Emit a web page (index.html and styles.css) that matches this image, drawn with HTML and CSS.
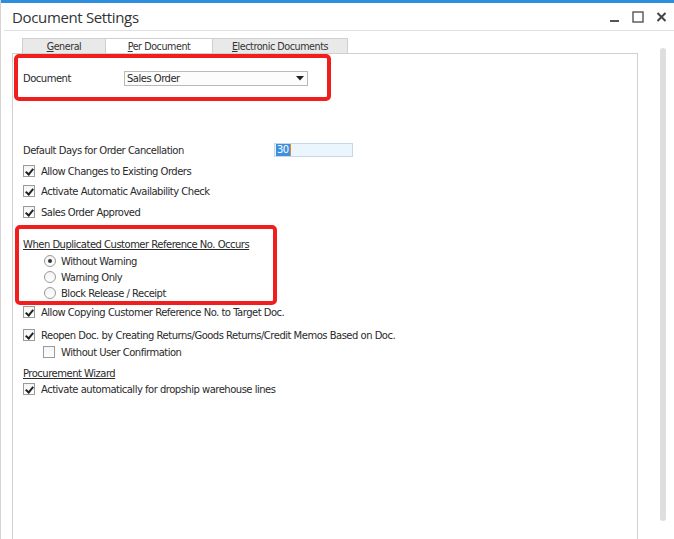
FILE: index.html
```html
<!DOCTYPE html>
<html>
<head>
<meta charset="utf-8">
<link rel="stylesheet" href="styles.css">
</head>
<body>
<div class="window">
  <div class="topbar"></div>
  <div class="titlebar">
    <div class="title">Document Settings</div>
    <div class="controls">
      <svg class="ctl" width="10" height="12" viewBox="0 0 10 12"><rect x="0" y="9" width="9" height="2" fill="#555"/></svg>
      <svg class="ctl" width="12" height="12" viewBox="0 0 12 12"><rect x="1" y="1" width="10" height="10" fill="none" stroke="#555" stroke-width="1.4"/></svg>
      <svg class="ctl" width="11" height="12" viewBox="0 0 11 12"><path d="M1.5 2 L9.5 10 M9.5 2 L1.5 10" stroke="#444" stroke-width="2"/></svg>
    </div>
  </div>
  <div class="body">
    <div class="main">
      <div class="tabs">
        <div class="tab tab-general"><u>G</u>eneral</div>
        <div class="tab tab-active tab-per"><u>P</u>er Document</div>
        <div class="tab tab-elec"><u>E</u>lectronic Documents</div>
      </div>
      <div class="panel">
        <div class="mark mark-doc"></div>
        <div class="mark mark-dup"></div>
        <div class="row row-doc">
          <span class="lbl-doc">Document</span>
          <div class="select">
            <span>Sales Order</span>
            <svg width="8" height="5" viewBox="0 0 8 5"><path d="M0 0 H8 L4 4.5 Z" fill="#222"/></svg>
          </div>
        </div>
        <div class="row row-days">
          <span class="lbl-days">Default Days for Order Cancellation</span>
          <div class="input"><span class="sel">30</span><span class="caret"></span></div>
        </div>
        <div class="row cb row-c1"><span class="box checked"></span>Allow Changes to Existing Orders</div>
        <div class="row cb row-c2"><span class="box checked"></span>Activate Automatic Availability Check</div>
        <div class="row cb row-c3"><span class="box checked"></span>Sales Order Approved</div>
        <div class="row heading row-h1">When Duplicated Customer Reference No. Occurs</div>
        <div class="row rb row-r1"><span class="radio on"></span>Without Warning</div>
        <div class="row rb"><span class="radio"></span>Warning Only</div>
        <div class="row rb"><span class="radio"></span>Block Release / Receipt</div>
        <div class="row cb row-c4"><span class="box checked"></span>Allow Copying Customer Reference No. to Target Doc.</div>
        <div class="row cb row-c5"><span class="box checked"></span>Reopen Doc. by Creating Returns/Goods Returns/Credit Memos Based on Doc.</div>
        <div class="row cb sub row-c6"><span class="box"></span>Without User Confirmation</div>
        <div class="row heading row-h2">Procurement Wizard</div>
        <div class="row cb"><span class="box checked"></span>Activate automatically for dropship warehouse lines</div>
      </div>
    </div>
    <div class="scrollbar"></div>
  </div>
</div>
</body>
</html>
```
FILE: styles.css
```css
html, body {
  margin: 0;
  padding: 0;
  background: #fff;
  overflow: hidden;
}
body {
  font-family: "DejaVu Sans", "Liberation Sans", sans-serif;
  width: 674px;
  height: 539px;
}
.window {
  height: 539px;
  border-left: 1px solid #d4d4d4;
  box-sizing: border-box;
  overflow: hidden;
}
.topbar {
  height: 3px;
  background: #2d8ee0;
}
.titlebar {
  height: 27px;
  display: flex;
  align-items: center;
  justify-content: space-between;
  border-bottom: 1px solid #e0e0e0;
  margin-left: 3px;
}
.title {
  font-family: "Open Sans", "Noto Sans", sans-serif;
  font-size: 15px;
  color: #333;
  padding-left: 8px;
  letter-spacing: -0.35px;
}
.controls {
  display: flex;
  align-items: center;
  gap: 12px;
  padding-right: 7px;
}
.ctl { display: block; }
.body {
  display: flex;
  align-items: flex-start;
}
.main {
  margin-left: 11px;
  margin-top: 7px;
  width: 626px;
}
.tabs {
  display: flex;
  padding-left: 10px;
  height: 15px;
}
.tab {
  font-size: 9.6px;
  color: #333;
  height: 15px;
  line-height: 15px;
  text-align: center;
  background: #e9e9e9;
  border: 1px solid #cfcfcf;
  border-bottom: none;
  box-sizing: border-box;
  letter-spacing: -0.45px;
}
.tab u { text-decoration: underline; }
.tab-general { width: 84px; }
.tab-per { width: 106px; border-left: none; border-right: none; }
.tab-elec { width: 136px; }
.tab-active {
  background: #fff;
}
.panel {
  position: relative;
  border: 1px solid #d0d0d0;
  height: 520px;
  box-sizing: border-box;
  padding: 16px 0 0 10px;
}
.row {
  display: flex;
  align-items: center;
  height: 16px;
  font-size: 10px;
  color: #2a2a2a;
  letter-spacing: -0.5px;
  white-space: nowrap;
}
.lbl-doc { width: 101px; }
.select {
  width: 184px;
  height: 15px;
  border: 1px solid #b9b9b9;
  box-sizing: border-box;
  display: flex;
  align-items: center;
  justify-content: space-between;
  padding: 0 3px 0 2px;
  background: #fcfcfc;
}
.select svg { display: block; }
.row-days { margin-top: 56px; }
.lbl-days { width: 251px; }
.input {
  width: 79px;
  height: 14px;
  border: 1px solid #c9d7e4;
  background: #eaf5fd;
  box-sizing: border-box;
  display: flex;
  align-items: center;
  padding-left: 1px;
}
.input .sel {
  background: #3d8fdf;
  color: #fff;
  line-height: 12px;
  padding: 0 1px;
}
.caret {
  width: 1px;
  height: 12px;
  background: #e8862a;
}
.cb { gap: 6px; }
.row-c1 { margin-top: 5px; }
.row-c2 { margin-top: 4px; }
.row-c3 { margin-top: 5px; }
.box {
  width: 12px;
  height: 12px;
  box-sizing: border-box;
  border: 1px solid #9a9a9a;
  background: linear-gradient(#f4f4f4, #fff);
  position: relative;
  flex: none;
}
.box.checked::after {
  content: "";
  position: absolute;
  left: 3px;
  top: 1px;
  width: 3px;
  height: 6px;
  border-right: 2px solid #222;
  border-bottom: 2px solid #222;
  transform: rotate(40deg);
}
.heading {
  text-decoration: underline;
}
.row-h1 { margin-top: 16px; }
.rb {
  padding-left: 21px;
  gap: 5px;
}
.row-r1 { margin-top: 1px; }
.radio {
  width: 12px;
  height: 12px;
  box-sizing: border-box;
  border: 1px solid #9a9a9a;
  border-radius: 50%;
  background: linear-gradient(#f2f2f2, #fff);
  position: relative;
  flex: none;
}
.radio.on::after {
  content: "";
  position: absolute;
  left: 3px;
  top: 3px;
  width: 4px;
  height: 4px;
  border-radius: 50%;
  background: #333;
}
.row-c4 { margin-top: 3px; }
.row-c5 { margin-top: 7px; }
.row-c6 { margin-top: 1px; }
.sub { padding-left: 20px; }
.row-h2 { margin-top: 5px; }
.mark {
  position: absolute;
  border: 4px solid #f21d1d;
  border-radius: 5px;
  box-sizing: border-box;
}
.mark-doc {
  left: 1px;
  top: 0;
  width: 317px;
  height: 47px;
}
.mark-dup {
  left: 2px;
  top: 171px;
  width: 262px;
  height: 80px;
}
.scrollbar {
  width: 6px;
  height: 473px;
  margin-top: 17px;
  margin-left: 22px;
  border-radius: 3px;
  background: #dedede;
}
```
